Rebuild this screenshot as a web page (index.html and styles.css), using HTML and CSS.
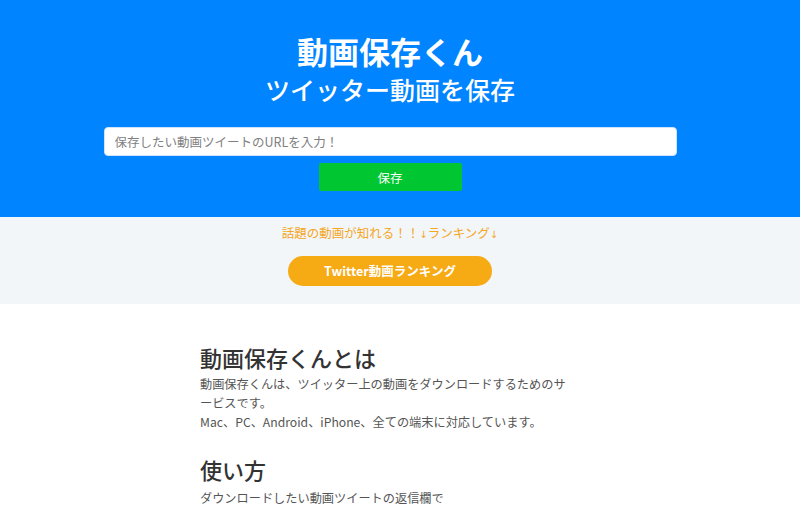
FILE: index.html
```html
<!DOCTYPE html>
<html lang="ja">
<head>
    <meta charset="UTF-8">
    <meta name="viewport" content="width=device-width, initial-scale=1.0">
    <title>動画保存くん</title>
    <link rel="stylesheet" href="styles.css">
</head>
<body>

    <!-- ヘッダー -->
    <header class="hero">
        <h1 class="hero-title">動画保存くん</h1>
        <h2 class="hero-sub">ツイッター動画を保存</h2>

        <form class="save-form" onsubmit="return false;">
            <input type="text" class="url-input" placeholder="保存したい動画ツイートのURLを入力！">
            <button type="submit" class="save-button">保存</button>
        </form>
    </header>

    <!-- ランキング -->
    <section class="ranking">
        <p class="ranking-lead">話題の動画が知れる！！<span class="arrow">↓</span>ランキング<span class="arrow">↓</span></p>
        <a href="#" class="ranking-button">Twitter動画ランキング</a>
    </section>

    <!-- 説明 -->
    <main class="about">
        <h3 class="about-title">動画保存くんとは</h3>
        <p class="about-text">動画保存くんは、ツイッター上の動画をダウンロードするためのサービスです。<br>Mac、PC、Android、iPhone、全ての端末に対応しています。</p>

        <h3 class="about-title usage">使い方</h3>
        <p class="about-text">ダウンロードしたい動画ツイートの返信欄で</p>
    </main>

</body>
</html>
```

FILE: styles.css
```css
body {
    margin: 0;
    font-family: "Noto Sans CJK JP", "Noto Sans", sans-serif;
    background-color: #fff;
    color: #333;
}

/* 青いヘッダー */
.hero {
    background-color: #0084ff;
    padding: 32px 20px 26px 0;
    text-align: center;
    color: #fff;
}

.hero-title {
    margin: 0;
    font-size: 31px;
    line-height: 37px;
    font-weight: bold;
}

.hero-sub {
    margin: 5px 0 0;
    font-size: 25px;
    line-height: 30px;
    font-weight: 500;
}

.save-form {
    display: flex;
    flex-direction: column;
    align-items: center;
    margin-top: 23px;
}

.url-input {
    width: 573px;
    height: 29px;
    box-sizing: border-box;
    padding: 0 10px;
    border: 1px solid #cfe4fb;
    border-radius: 4px;
    font-family: inherit;
    font-size: 12.5px;
    color: #333;
}

.url-input::placeholder {
    color: #808080;
}

.save-button {
    margin-top: 7px;
    width: 143px;
    height: 28px;
    border: none;
    border-radius: 2px;
    background-color: #00c632;
    color: #fff;
    font-family: inherit;
    font-size: 12.5px;
    cursor: pointer;
}

/* ランキング */
.ranking {
    background-color: #f3f6f9;
    padding: 6px 20px 18px 0;
    text-align: center;
}

.ranking-lead {
    margin: 0;
    font-size: 12.5px;
    line-height: 19px;
    color: #f5a623;
}

.ranking-lead .arrow {
    font-family: "DejaVu Sans", sans-serif;
    font-size: 10px;
}

.ranking-button {
    display: block;
    width: 204px;
    height: 30px;
    line-height: 30px;
    margin: 12px auto 0;
    border-radius: 15px;
    background-color: #f6aa14;
    color: #fff;
    font-size: 12.5px;
    font-weight: bold;
    text-decoration: none;
}

/* 説明 */
.about {
    max-width: 374px;
    padding: 39px 0 0 200px;
}

.about-title {
    margin: 0 0 4px;
    font-size: 22px;
    line-height: 28px;
    font-weight: 500;
    color: #333;
}

.about-title.usage {
    margin-top: 23px;
    margin-bottom: 6px;
}

.about-text {
    margin: 0;
    font-size: 12.2px;
    line-height: 19px;
    color: #555;
    line-break: loose;
}
```
